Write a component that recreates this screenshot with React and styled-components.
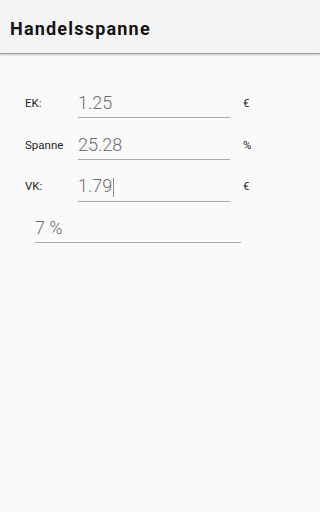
import React from "react";
import styled, { createGlobalStyle } from "styled-components";

const Global = createGlobalStyle`
  html, body { margin: 0; padding: 0; background: #fafafa; }
  body { font-family: Roboto, "Liberation Sans", sans-serif; }
`;

const Page = styled.div`
  width: 100%;
  min-height: 100vh;
  background: #fafafa;
  overflow: hidden;
`;

const Header = styled.header`
  height: 53px;
  background: #f4f4f4;
  border-bottom: 1px solid #9e9e9e;
  box-shadow: 0 1px 2px rgba(0, 0, 0, 0.22);
  display: flex;
  align-items: center;
  padding-left: 10px;
  position: relative;
`;

const Title = styled.h1`
  margin: 0;
  font-family: Roboto, "Liberation Sans", sans-serif;
  font-weight: 700;
  font-size: 18px;
  letter-spacing: 1.2px;
  color: #141414;
  padding-top: 3px;
`;

const Form = styled.div`
  padding-top: 34px;
  display: flex;
  flex-direction: column;
  gap: 11.7px;
`;

const Row = styled.div`
  display: flex;
  align-items: center;
  padding-left: ${(p) => p.$indent}px;
  height: 30px;
`;

const Label = styled.div`
  width: 53px;
  font-size: 11.5px;
  color: #1e1e1e;
`;

const Field = styled.div`
  width: ${(p) => p.$width}px;
  box-sizing: border-box;
  padding: 4px 0;
  font-size: 18px;
  font-weight: 300;
  line-height: 21px;
  color: #6e6e6e;
  border-bottom: 1px solid #ababab;
  white-space: nowrap;
`;

const Caret = styled.span`
  display: inline-block;
  width: 1px;
  height: 19px;
  background: #8a8a8a;
  vertical-align: -5px;
  margin-left: 0.5px;
`;

const Unit = styled.div`
  margin-left: 13px;
  font-size: 11.5px;
  color: #1e1e1e;
`;

const rows = [
  { label: "EK:", value: "1.25", unit: "€" },
  { label: "Spanne", value: "25.28", unit: "%" },
  { label: "VK:", value: "1.79", unit: "€", focused: true },
];

export default function App() {
  return (
    <Page>
      <Global />
      <Header>
        <Title>Handelsspanne</Title>
      </Header>
      <Form>
        {rows.map((r) => (
          <Row key={r.label} $indent={25}>
            <Label>{r.label}</Label>
            <Field $width={152}>
              {r.value}
              {r.focused && <Caret />}
            </Field>
            <Unit>{r.unit}</Unit>
          </Row>
        ))}
        <Row $indent={35}>
          <Field $width={206}>7 %</Field>
        </Row>
      </Form>
    </Page>
  );
}
